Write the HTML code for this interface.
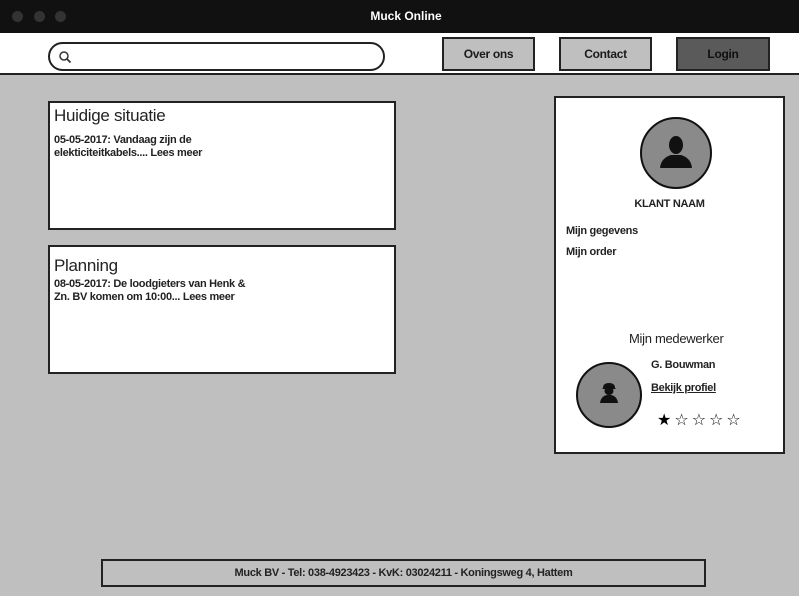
<!DOCTYPE html>
<html><head><style>
*{margin:0;padding:0;box-sizing:border-box}
body{width:799px;height:596px;background:#bfbfbf;font-family:"Liberation Sans",sans-serif;position:relative;overflow:hidden;color:#222}
.a{position:absolute}
.box{position:absolute;background:#fff;border:2px solid #222}
.btn{position:absolute;top:37px;height:34px;border:2px solid #222;font-size:12px;font-weight:bold;text-align:center;line-height:30px;letter-spacing:-0.3px;color:#1a1a1a}
.t{font-size:11px;font-weight:bold;line-height:13px;letter-spacing:-0.3px}
</style></head><body>
<div class="a" style="left:0;top:0;width:799px;height:33px;background:#111"></div>
<div class="a" style="left:12px;top:11px;width:11px;height:11px;border-radius:50%;background:#333"></div>
<div class="a" style="left:34px;top:11px;width:11px;height:11px;border-radius:50%;background:#333"></div>
<div class="a" style="left:55px;top:11px;width:11px;height:11px;border-radius:50%;background:#333"></div>
<div class="a" style="left:0;top:9px;width:812px;text-align:center;color:#fff;font-size:12px;font-weight:bold">Muck Online</div>
<div class="a" style="left:0;top:33px;width:799px;height:42px;background:#fff;border-bottom:2px solid #222"></div>
<div class="a" style="left:48px;top:42px;width:337px;height:29px;border:2px solid #222;border-radius:15px;background:#fff"></div>
<svg class="a" style="left:58px;top:50px" width="14" height="14" viewBox="0 0 14 14"><circle cx="6" cy="6" r="4" fill="none" stroke="#333" stroke-width="1.5"/><line x1="9" y1="9" x2="12.5" y2="12.5" stroke="#333" stroke-width="1.8"/></svg>
<div class="btn" style="left:442px;width:93px;background:#bfbfbf">Over ons</div>
<div class="btn" style="left:559px;width:93px;background:#bfbfbf">Contact</div>
<div class="btn" style="left:676px;width:94px;background:#5a5a5a;color:#111">Login</div>

<div class="box" style="left:48px;top:101px;width:348px;height:129px">
<div class="a" style="left:4px;top:3px;font-size:17px;letter-spacing:-0.3px">Huidige situatie</div>
<div class="a t" style="left:4px;top:31px">05-05-2017: Vandaag zijn de<br>elekticiteitkabels.... Lees meer</div></div>
<div class="box" style="left:48px;top:245px;width:348px;height:129px">
<div class="a" style="left:4px;top:9px;font-size:17px;letter-spacing:-0.3px">Planning</div>
<div class="a t" style="left:4px;top:31px">08-05-2017: De loodgieters van Henk &amp;<br>Zn. BV komen om 10:00... Lees meer</div></div>

<div class="box" style="left:554px;top:96px;width:231px;height:358px">
<div class="a" style="left:84px;top:19px;width:72px;height:72px;border-radius:50%;background:#8a8a8a;border:2px solid #111"></div>
<svg class="a" style="left:101px;top:37px" width="38" height="34" viewBox="0 0 38 34"><ellipse cx="19" cy="10" rx="7" ry="9" fill="#111"/><path d="M3 33 Q4 23 14 20 L24 20 Q34 23 35 33Z" fill="#111"/></svg>
<div class="a t" style="left:0;top:100px;width:227px;text-align:center">KLANT NAAM</div>
<div class="a t" style="left:10px;top:127px">Mijn gegevens</div>
<div class="a t" style="left:10px;top:148px">Mijn order</div>
<div class="a" style="left:73px;top:233px;font-size:13px;letter-spacing:-0.3px">Mijn medewerker</div>
<div class="a t" style="left:95px;top:261px">G. Bouwman</div>
<div class="a t" style="left:95px;top:284px;text-decoration:underline">Bekijk profiel</div>
<div class="a" style="left:20px;top:264px;width:66px;height:66px;border-radius:50%;background:#8a8a8a;border:2px solid #111"></div>
<svg class="a" style="left:43px;top:284px" width="20" height="22" viewBox="0 0 20 22"><path d="M4 6 Q4 1 10 1 Q16 1 16 6 L17 7 L3 7Z" fill="#111"/><ellipse cx="10" cy="9" rx="4.5" ry="4" fill="#111"/><path d="M1 21 Q2 14 8 13 L12 13 Q18 14 19 21Z" fill="#111"/></svg>
<div class="a" style="left:101px;top:312px;font-size:16px;letter-spacing:3px;font-family:'DejaVu Sans',sans-serif;color:#000">★☆☆☆☆</div>
</div>

<div class="a" style="left:101px;top:559px;width:605px;height:28px;border:2px solid #222;font-size:11px;font-weight:bold;text-align:center;line-height:24px;letter-spacing:-0.3px">Muck BV - Tel: 038-4923423 - KvK: 03024211 - Koningsweg 4, Hattem</div>
</body></html>
